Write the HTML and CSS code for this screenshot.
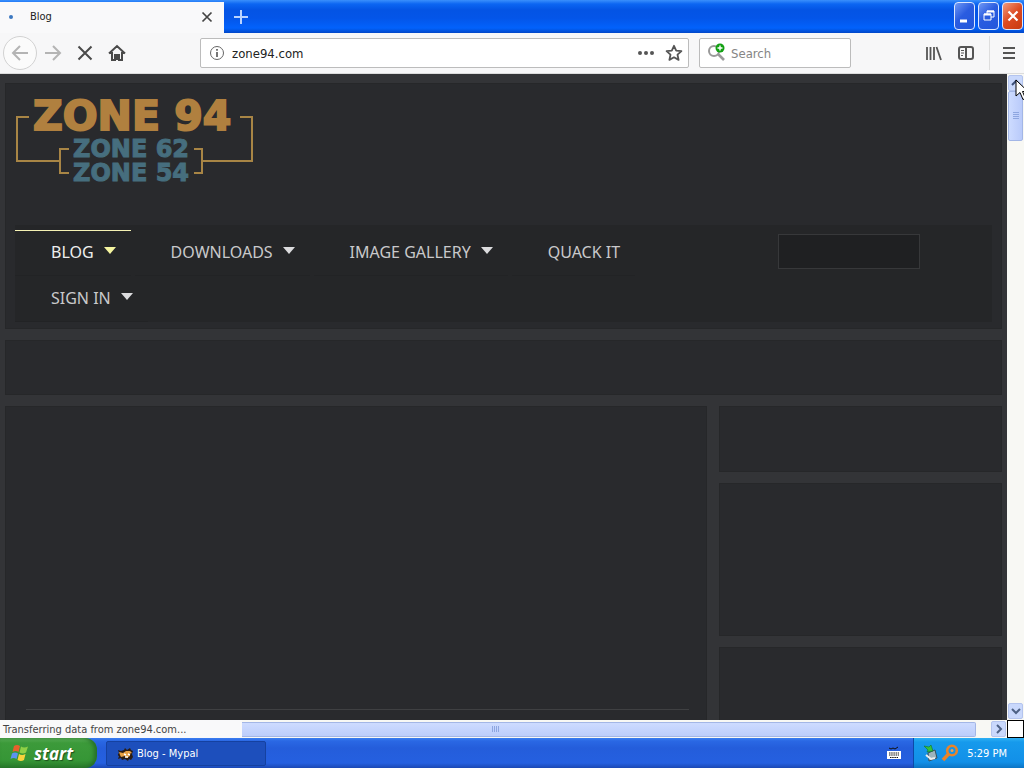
FILE: index.html
```html
<!DOCTYPE html>
<html lang="en">
<head>
  <meta charset="UTF-8">
  <meta name="viewport" content="width=device-width, initial-scale=1.0">
  <title>Blog</title>
  <link rel="stylesheet" href="styles.css">
</head>
<body>
  <!-- Title bar -->
  <header class="titlebar">
    <div class="tab">
      <span class="tab__dot"></span>
      <span class="tab__title">Blog</span>
      <button class="icon-btn" aria-label="Close tab">
        <svg width="12" height="12" viewBox="0 0 12 12"><path d="M1.5 1.5l9 9M10.500 1.500l-9 9" stroke="#444" stroke-width="1.700"/></svg>
      </button>
    </div>
    <button class="icon-btn titlebar__new" aria-label="New tab">
      <svg width="16" height="16" viewBox="0 0 16 16"><path d="M8 1v14M1 8h14" stroke="#b9d3ff" stroke-width="2"/></svg>
    </button>
    <div class="window-buttons">
      <button class="window-btn" aria-label="Minimize">
        <svg width="18" height="24" viewBox="0 0 18 24"><path d="M4 17h7" stroke="#fff" stroke-width="3"/></svg>
      </button>
      <button class="window-btn" aria-label="Restore">
        <svg width="18" height="24" viewBox="0 0 18 24" fill="none" stroke="#fff"><path d="M7 10V7h7v6h-3"/><path d="M7 7.500h7" stroke-width="2"/><path d="M4 10h7v6H4z"/><path d="M4 10.500h7" stroke-width="2"/></svg>
      </button>
      <button class="window-btn window-btn--close" aria-label="Close">
        <svg width="18" height="24" viewBox="0 0 18 24"><path d="M4.500 7.500l9 9M13.500 7.500l-9 9" stroke="#fff" stroke-width="2.200"/></svg>
      </button>
    </div>
  </header>

  <!-- Toolbar -->
  <div class="toolbar">
    <button class="icon-btn toolbar__back" aria-label="Back">
      <svg width="18" height="18" viewBox="0 0 18 18" fill="none" stroke="#b4b4b4" stroke-width="2"><path d="M17 9H2M9 2L2 9l7 7"/></svg>
    </button>
    <button class="icon-btn toolbar__btn" aria-label="Forward">
      <svg width="18" height="18" viewBox="0 0 18 18" fill="none" stroke="#b4b4b4" stroke-width="2"><path d="M1 9h15M9 2l7 7-7 7"/></svg>
    </button>
    <button class="icon-btn toolbar__btn" aria-label="Stop">
      <svg width="16" height="16" viewBox="0 0 16 16"><path d="M1.500 1.500l13 13M14.500 1.500l-13 13" stroke="#4a4a4a" stroke-width="2"/></svg>
    </button>
    <button class="icon-btn toolbar__btn" aria-label="Home">
      <svg width="18" height="18" viewBox="0 0 18 18" fill="none" stroke="#4a4a4a" stroke-width="2"><path d="M1 9.500L9 2l8 7.500M4 8v8h3v-5h4v5h3V8"/><path d="M9 12v4"/></svg>
    </button>
    <div class="field field--url">
      <svg width="16" height="16" viewBox="0 0 16 16" fill="none" stroke="#666"><circle cx="8" cy="8" r="6.500"/><path d="M8 7v5" stroke-width="1.800"/><path d="M8 4v1.800" stroke-width="1.800"/></svg>
      <input class="field__input" type="text" value="zone94.com" aria-label="Address">
      <button class="icon-btn" aria-label="Page actions">
        <svg width="18" height="18" viewBox="0 0 18 18" fill="#555"><circle cx="3" cy="9" r="2"/><circle cx="9" cy="9" r="2"/><circle cx="15" cy="9" r="2"/></svg>
      </button>
      <button class="icon-btn" aria-label="Bookmark">
        <svg width="18" height="18" viewBox="0 0 18 18" fill="none" stroke="#555" stroke-width="1.800" stroke-linejoin="round"><path d="M9 1.800l2.200 4.800 5.200.6-3.900 3.500 1.100 5.200L9 13.300l-4.600 2.600 1.100-5.200-3.900-3.500 5.200-.6z"/></svg>
      </button>
    </div>
    <div class="field field--search">
      <svg width="20" height="20" viewBox="0 0 20 20"><g fill="none" stroke="#999"><circle cx="7" cy="8" r="5" stroke-width="2"/><path d="M11 11l6 6" stroke-width="2.600"/></g><circle cx="13" cy="5" r="4.500" fill="#12a012"/><path d="M13 2.500v5M10.500 5h5" stroke="#fff" stroke-width="1.400"/></svg>
      <input class="field__input" type="text" placeholder="Search" aria-label="Search">
    </div>
    <div class="toolbar__end">
      <button class="icon-btn" aria-label="Library">
        <svg width="18" height="18" viewBox="0 0 18 18" stroke="#555" stroke-width="1.800"><path d="M2 3v13M5.500 3v13M9 3v13M11.500 3l4.500 13"/></svg>
      </button>
      <button class="icon-btn" aria-label="Sidebars">
        <svg width="18" height="18" viewBox="0 0 18 18" fill="none" stroke="#555" stroke-width="2"><rect x="2" y="3" width="14" height="12" rx="2"/><path d="M9 3v12"/><path d="M4 6.500h3M4 9h3M4 11.500h2" stroke-width="1"/></svg>
      </button>
      <button class="icon-btn toolbar__menu" aria-label="Open menu">
        <svg width="14" height="14" viewBox="0 0 14 14" stroke="#555" stroke-width="2"><path d="M1 2h12M1 7h12M1 12h12"/></svg>
      </button>
    </div>
  </div>

  <!-- Page -->
  <div class="viewport">
    <main class="page">
      <section class="panel masthead">
        <a class="logo" href="#" aria-label="Zone 94">
          <svg width="240" height="96" viewBox="0 0 240 96">
            <g fill="none" stroke="#a88545" stroke-width="2">
              <path d="M14 21H2v44h43M54 53H45v24h9"/>
              <path d="M225 21h12v44h-50M179 53h8v24h-8"/>
            </g>
            <text class="logo__main" x="18" y="34">ZONE 94</text>
            <text class="logo__sub" x="58" y="61">ZONE 62</text>
            <text class="logo__sub" x="58" y="85">ZONE 54</text>
          </svg>
        </a>
        <div class="navbar">
          <nav class="nav">
            <a class="nav__item nav__item--active" href="#">BLOG<span class="nav__arrow"></span></a>
            <a class="nav__item" href="#">DOWNLOADS<span class="nav__arrow"></span></a>
            <a class="nav__item" href="#">IMAGE GALLERY<span class="nav__arrow"></span></a>
            <a class="nav__item" href="#">QUACK IT</a>
            <a class="nav__item" href="#">SIGN IN<span class="nav__arrow"></span></a>
          </nav>
          <input class="site-search" type="text" aria-label="Search site">
        </div>
      </section>
      <section class="panel banner"></section>
      <div class="columns">
        <article class="panel content"><hr class="content__rule"></article>
        <aside class="sidebar">
          <section class="panel sidebar__short"></section>
          <section class="panel sidebar__tall"></section>
          <section class="panel sidebar__rest"></section>
        </aside>
      </div>
    </main>
    <div class="vscroll">
      <button class="scroll-btn" aria-label="Scroll up">
        <svg width="10" height="8" viewBox="0 0 10 8"><path d="M1 6l4-4 4 4" fill="none" stroke="#3c4f78" stroke-width="2"/></svg>
      </button>
      <div class="vscroll__thumb">
        <svg width="8" height="8" viewBox="0 0 8 8" stroke="#8ea6e0"><path d="M1 .5h6M1 2.500h6M1 4.500h6M1 6.500h6"/></svg>
      </div>
      <button class="scroll-btn vscroll__down" aria-label="Scroll down">
        <svg width="10" height="8" viewBox="0 0 10 8"><path d="M1 2l4 4 4-4" fill="none" stroke="#4d6185" stroke-width="2"/></svg>
      </button>
    </div>
  </div>

  <div class="statusbar">
    <div class="statusbar__text">Transferring data from zone94.com...</div>
    <div class="hscroll">
      <div class="hscroll__thumb">
        <svg width="8" height="8" viewBox="0 0 8 8" stroke="#8ea6e0"><path d="M.5 1v6M2.500 1v6M4.500 1v6M6.500 1v6"/></svg>
      </div>
    </div>
    <button class="scroll-btn" aria-label="Scroll right">
      <svg width="8" height="10" viewBox="0 0 8 10"><path d="M2 1l4 4-4 4" fill="none" stroke="#4d6185" stroke-width="2"/></svg>
    </button>
    <div class="statusbar__corner"></div>
  </div>

  <!-- Taskbar -->
  <footer class="taskbar">
    <button class="start">
      <svg width="20" height="20" viewBox="0 0 20 20"><path d="M4 3q3-2 6 0L8.500 9q-3-2-6 0z" fill="#e8602c"/><path d="M11 3.500q3 2 7 0L16 9.500q-3 2-6.500 0z" fill="#8fd046"/><path d="M2 10.500q3-2 6 0L6.500 16q-3-2-6 0z" fill="#5b93f0"/><path d="M9 11q3 2 6.500 0L14 17q-3 2-6.500 0z" fill="#f8d23c"/></svg>
      start
    </button>
    <button class="task">
      <svg width="16" height="16" viewBox="0 0 16 16"><path d="M0 4l3 1 3-1 1-2 2 2 3-2 1 2 2 1-1 3 1 3-2 3-2-1-1 2-3-2-3 1-1-2-3 1 1-3-2-1 2-2z" fill="#2b1c14"/><path d="M1 6l4 1 3-2 4 0 2 2-3 1 1 2-3 2-2-2-4 1-1-2z" fill="#e7a044"/><path d="M6 8l2 1M10 8l2 1M7 11l3 0" stroke="#fff" stroke-width="1.400"/></svg>
      Blog - Mypal
    </button>
    <button class="icon-btn taskbar__keyboard" aria-label="Keyboard">
      <svg width="14" height="14" viewBox="0 0 14 14"><path d="M2 2l2 1 2-1 2 1 3-2" fill="none" stroke="#111"/><path d="M0 5h14v8H0z" fill="#fff"/><path d="M2 7h10M2 9h10M3 11.500h8" stroke="#111" stroke-dasharray="1.500 .7"/></svg>
    </button>
    <div class="tray">
      <svg width="16" height="18" viewBox="0 0 16 18"><path d="M5 9l7-3 2 8-8 3z" fill="#9eb4bd" stroke="#38505b"/><path d="M1 2l5 1 2-2 2 6-6 1 1-2z" fill="#35c23c" stroke="#12752a" stroke-width=".6"/><path d="M3 11l5 4 4-1" fill="none" stroke="#eee" stroke-width="2"/></svg>
      <svg width="18" height="18" viewBox="0 0 18 18" fill="none"><circle cx="11" cy="6.500" r="4.800" stroke="#e8842a" stroke-width="2.600"/><path d="M7.500 10L2 16" stroke="#e8842a" stroke-width="3.500"/><circle cx="11" cy="6.500" r="1.500" fill="#f5a04a"/></svg>
      <span class="tray__clock">5:29 PM</span>
    </div>
  </footer>

  <svg class="cursor" width="14" height="22" viewBox="0 0 14 22"><path d="M1 1v16l4-3.500 3 7 2.500-1-3-7H13z" fill="#fff" stroke="#000"/></svg>
</body>
</html>
```

FILE: styles.css
```css
* {
  margin: 0;
  padding: 0;
  box-sizing: border-box;
}

body {
  display: flex;
  flex-direction: column;
  height: 100vh;
  overflow: hidden;
  font-family: "DejaVu Sans Condensed", "DejaVu Sans", sans-serif;
  font-size: 11px;
  color: #222;
}

svg {
  display: block;
  flex: none;
}

button {
  border: 0;
  background: none;
  font: inherit;
  color: inherit;
}

.icon-btn {
  display: flex;
  align-items: center;
  justify-content: center;
}

/* Title bar */
.titlebar {
  display: flex;
  height: 33px;
  background: linear-gradient(#3a90fc 0, #0c66f2 4px, #0454e4 10px, #0455e8 18px, #0262fc 28px, #0147c8 33px);
}

.tab {
  display: flex;
  align-items: center;
  width: 224px;
  margin-top: 2px;
  padding: 0 11px 2px 9px;
  background: #f9f9fa;
}

.tab__dot {
  width: 4px;
  height: 4px;
  border-radius: 50%;
  background: #3c78c0;
}

.tab__title {
  flex: 1;
  padding-left: 17px;
}

.titlebar__new {
  width: 34px;
}

.window-buttons {
  display: flex;
  gap: 3px;
  margin-left: auto;
  padding: 2px 1px 3px 0;
}

.window-btn {
  display: flex;
  align-items: center;
  justify-content: center;
  width: 21px;
  border: 1px solid #dce8ff;
  border-radius: 4px;
  background: linear-gradient(135deg, #6f98f4, #2a5ce0 45%, #2256dc);
}

.window-btn--close {
  background: linear-gradient(135deg, #f09a7e, #dc4a22 50%, #c83a10);
}

/* Toolbar */
.toolbar {
  display: flex;
  align-items: center;
  height: 41px;
  padding: 0 8px 0 3px;
  background: #f7f7f8;
  border-bottom: 1px solid #dcdcdc;
}

.toolbar__back {
  width: 34px;
  height: 34px;
  border: 1px solid #d2d2d2;
  border-radius: 50%;
  background: #fbfbfb;
}

.toolbar__btn {
  width: 32px;
  height: 32px;
}

.field {
  display: flex;
  align-items: center;
  height: 30px;
  background: #fff;
  border: 1px solid #bcbcbc;
  border-radius: 2px;
}

.field__input {
  flex: 1;
  min-width: 0;
  border: 0;
  outline: 0;
  background: none;
  font: inherit;
  font-size: 13px;
  color: #222;
}

.field__input::placeholder {
  color: #858585;
}

.field--url {
  flex: 1;
  gap: 10px;
  margin-left: 67px;
  padding: 0 5px 0 8px;
}

.field--url .field__input {
  margin-left: -3px;
}

.field--search {
  width: 152px;
  gap: 4px;
  margin-left: 10px;
  padding: 0 7px;
}

.toolbar__end {
  display: flex;
  align-items: center;
  gap: 14px;
  margin-left: 74px;
}

.toolbar__menu {
  height: 34px;
  padding-left: 12px;
  border-left: 1px solid #dedede;
}

/* Page */
.viewport {
  display: flex;
  flex: 1;
  min-height: 0;
}

.page {
  display: flex;
  flex: 1;
  flex-direction: column;
  gap: 11px;
  min-width: 0;
  padding: 9px 5px 0;
  overflow: hidden;
  background: #333437;
}

.panel {
  background: #292a2d;
  border: 1px solid #262729;
}

.masthead {
  padding: 12px 9px 6px;
}

.logo {
  display: block;
  width: 240px;
}

.navbar {
  display: flex;
  align-items: flex-start;
  margin-top: 33px;
  padding: 5px 72px 0 0;
  background: #252628;
}

.nav {
  display: flex;
  flex: 1;
  flex-wrap: wrap;
  gap: 0 4px;
}

.nav__item {
  display: flex;
  align-items: center;
  gap: 10px;
  height: 46px;
  padding: 0 15px 2px 36px;
  border-top: 1px solid transparent;
  border-bottom: 1px solid #222325;
  font-family: "Noto Sans", sans-serif;
  font-size: 16px;
  color: #c9c9cb;
  text-decoration: none;
}

.nav__item--active {
  border-top-color: #f5f2b4;
  color: #eee;
}

.nav__arrow {
  margin-bottom: 4px;
  border: 6px solid transparent;
  border-top: 7px solid #dcdcde;
  border-bottom: 0;
}

.nav__item--active .nav__arrow {
  border-top-color: #f5f5a0;
}

.site-search {
  width: 142px;
  height: 35px;
  margin: 4px 0 0 30px;
  padding: 0 8px;
  background: #1f2022;
  border: 1px solid #37383a;
  color: #ccc;
}

/* Heavy block lettering */
.logo__main,
.logo__sub {
  font-family: "DejaVu Sans", sans-serif;
  font-weight: bold;
  font-size: 41px;
  fill: #b0803f;
  stroke: #b0803f;
  stroke-width: 2px;
}

.logo__sub {
  font-size: 24px;
  fill: #466e7e;
  stroke: #466e7e;
  stroke-width: 1px;
}

.banner {
  flex: none;
  height: 55px;
}

.columns {
  display: flex;
  flex: 1;
  gap: 12px;
  min-height: 0;
}

.content {
  display: flex;
  flex: 1;
  flex-direction: column;
  justify-content: flex-end;
  padding: 0 17px 10px 20px;
  border-bottom: 0;
}

.content__rule {
  border: 0;
  border-top: 1px solid #3f4042;
}

.sidebar {
  display: flex;
  flex-direction: column;
  gap: 11px;
  width: 283px;
}

.sidebar__short {
  height: 66px;
}

.sidebar__tall {
  height: 153px;
}

.sidebar__rest {
  flex: 1;
  border-bottom: 0;
}

/* Scroll bars */
.vscroll {
  display: flex;
  flex-direction: column;
  align-items: center;
  width: 17px;
  padding: 1px 0;
  background: #f8f8f4;
}

.scroll-btn {
  display: flex;
  flex: none;
  align-items: center;
  justify-content: center;
  width: 15px;
  height: 16px;
  border: 1px solid #b4c4ee;
  border-radius: 2px;
  background: #c9d8fc;
}

.vscroll__thumb {
  display: flex;
  align-items: center;
  justify-content: center;
  width: 15px;
  height: 50px;
  border: 1px solid #a3b6e6;
  border-radius: 2px;
  background: linear-gradient(90deg, #cddbff, #b9cafa);
}

.vscroll__down {
  margin-top: auto;
}

.statusbar {
  display: flex;
  align-items: center;
  height: 18px;
  background: #f8f8f4;
}

.statusbar__text {
  width: 242px;
  padding: 1px 3px 0;
  line-height: 17px;
  background: #f9f9fa;
  color: #444;
}

.hscroll {
  display: flex;
  flex: 1;
  padding-right: 15px;
}

.hscroll__thumb {
  display: flex;
  flex: 1;
  align-items: center;
  justify-content: center;
  height: 15px;
  padding-right: 226px;
  border: 1px solid #a3b6e6;
  border-left: 0;
  border-radius: 0 2px 2px 0;
  background: linear-gradient(#cddbff, #bccdfb);
}

.statusbar__corner {
  width: 17px;
  height: 18px;
  margin-left: 1px;
  border: 1px solid #000;
  background: #fff;
}

/* Taskbar */
.taskbar {
  display: flex;
  height: 30px;
  background: linear-gradient(#3a7df0 0, #2a68e4 3px, #245ddb 10px, #2560e0 25px, #1b48b4 30px);
  color: #fff;
}

.start {
  display: flex;
  align-items: center;
  gap: 4px;
  width: 97px;
  padding-left: 10px;
  border-radius: 0 12px 12px 0;
  background: linear-gradient(#5fb55c 0, #3c9a3a 5px, #369636 22px, #287a2a 30px);
  box-shadow: inset -3px 0 4px #256f28;
  font-family: "Open Sans", sans-serif;
  font-size: 17px;
  font-style: italic;
  font-weight: bold;
  text-shadow: 1px 1px 1px #1c501c;
}

.task {
  display: flex;
  align-items: center;
  gap: 3px;
  width: 160px;
  margin: 3px 0 2px 9px;
  padding-left: 11px;
  border: 1px solid #1541a0;
  border-radius: 2px;
  background: #1d4fbc;
}

.taskbar__keyboard {
  margin-left: auto;
  padding-right: 12px;
}

.tray {
  display: flex;
  align-items: center;
  gap: 2px;
  padding: 0 17px 0 9px;
  border-left: 1px solid #0c4aa8;
  background: linear-gradient(#2fb0f4 0, #169aec 4px, #1290e8 24px, #0c74c4 30px);
}

.tray__clock {
  padding-left: 6px;
}

/* Mouse pointer over the scroll bar */
.cursor {
  position: absolute;
  top: 79px;
  right: -5px;
}
```
